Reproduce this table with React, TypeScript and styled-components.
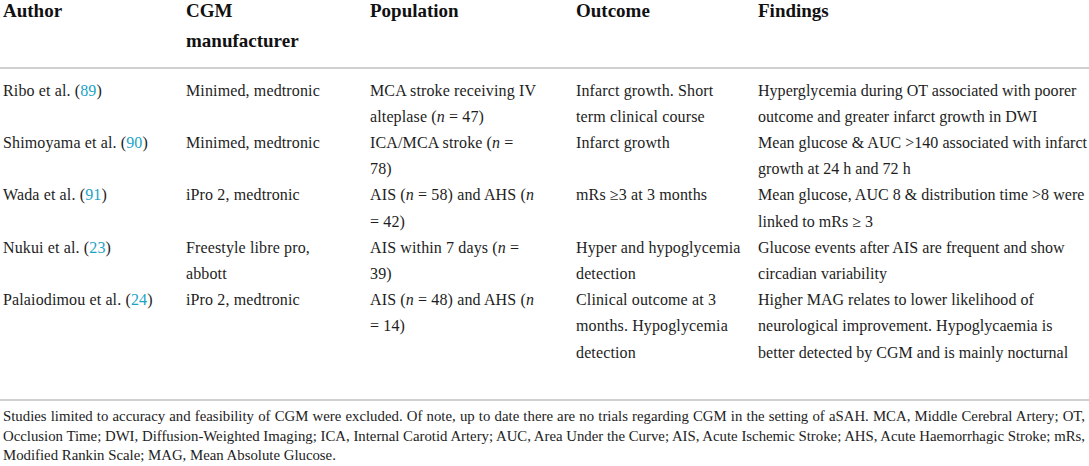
import React from "react";
import styled, { createGlobalStyle } from "styled-components";

const Global = createGlobalStyle`
  html, body { margin: 0; padding: 0; background: #fff; overflow: hidden; }
  body { font-family: "Liberation Serif", "Times New Roman", serif; color: #1d1d1d; }
`;

const Wrap = styled.div`
  width: 1089px;
`;

const Table = styled.table`
  width: 100%;
  border-collapse: collapse;
  table-layout: fixed;
  margin-top: -4px;
`;

const Th = styled.th`
  text-align: left;
  vertical-align: top;
  font-size: 19px;
  font-weight: bold;
  line-height: 30px;
  padding: 0 8px 11px 3px;
  color: #111;
  border-bottom: 2px solid #d0d0d0;
`;

const Td = styled.td<{ $pr: number; $ls: number; $first?: boolean; $last?: boolean }>`
  vertical-align: top;
  font-size: 16px;
  letter-spacing: ${(p) => p.$ls}px;
  line-height: 26.2px;
  padding-left: 3px;
  padding-right: ${(p) => p.$pr}px;
  padding-top: ${(p) => (p.$first ? 8.5 : 0)}px;
  padding-bottom: ${(p) => (p.$last ? 33 : 0)}px;
  white-space: normal;
`;

const Ref = styled.span`
  color: #1ba3c6;
`;

const Note = styled.p`
  margin: 0;
  border-top: 2px solid #d0d0d0;
  padding: 6.5px 4px 0 3px;
  font-size: 14.8px;
  line-height: 19.5px;
  text-align: justify;
  color: #222;
`;

const I = styled.i``;

type Row = [React.ReactNode, React.ReactNode, React.ReactNode, React.ReactNode, React.ReactNode];

const padRight = [8, 20, 12, 10, 0];
const spacing = [0.13, 0.13, 0.13, 0.13, 0.03];

const rows: Row[] = [
  [
    <>Ribo et al. (<Ref>89</Ref>)</>,
    "Minimed, medtronic",
    <>MCA stroke receiving IV<br />alteplase (<I>n</I> = 47)</>,
    "Infarct growth. Short term clinical course",
    "Hyperglycemia during OT associated with poorer outcome and greater infarct growth in DWI",
  ],
  [
    <>Shimoyama et al. (<Ref>90</Ref>)</>,
    "Minimed, medtronic",
    <>ICA/MCA stroke (<I>n</I> =<br />78)</>,
    "Infarct growth",
    <>Mean glucose &amp; AUC &gt;140 associated with&nbsp;infarct<br />growth at 24 h and 72 h</>,
  ],
  [
    <>Wada et al. (<Ref>91</Ref>)</>,
    "iPro 2, medtronic",
    <>AIS (<I>n</I> = 58) and AHS (<I>n</I><br />= 42)</>,
    "mRs ≥3 at 3 months",
    <>Mean glucose, AUC 8 &amp; distribution time &gt;8&nbsp;were<br />linked to mRs ≥ 3</>,
  ],
  [
    <>Nukui et al. (<Ref>23</Ref>)</>,
    "Freestyle libre pro, abbott",
    <>AIS within 7 days (<I>n</I> =<br />39)</>,
    "Hyper and hypoglycemia detection",
    "Glucose events after AIS are frequent and show circadian variability",
  ],
  [
    <>Palaiodimou et al. (<Ref>24</Ref>)</>,
    "iPro 2, medtronic",
    <>AIS (<I>n</I> = 48) and AHS (<I>n</I><br />= 14)</>,
    "Clinical outcome at 3 months. Hypoglycemia detection",
    "Higher MAG relates to lower likelihood of neurological improvement. Hypoglycaemia is better detected by CGM and is mainly nocturnal",
  ],
];

export default function App() {
  return (
    <Wrap>
      <Global />
      <Table>
        <colgroup>
          <col style={{ width: 183 }} />
          <col style={{ width: 184 }} />
          <col style={{ width: 206 }} />
          <col style={{ width: 182 }} />
          <col />
        </colgroup>
        <thead>
          <tr>
            <Th>Author</Th>
            <Th>
              CGM
              <br />
              manufacturer
            </Th>
            <Th>Population</Th>
            <Th>Outcome</Th>
            <Th>Findings</Th>
          </tr>
        </thead>
        <tbody>
          {rows.map((r, i) => (
            <tr key={i}>
              {r.map((c, j) => (
                <Td
                  key={j}
                  $pr={padRight[j]}
                  $ls={spacing[j]}
                  $first={i === 0}
                  $last={i === rows.length - 1}
                >
                  {c}
                </Td>
              ))}
            </tr>
          ))}
        </tbody>
      </Table>
      <Note>
        Studies limited to accuracy and feasibility of CGM were excluded. Of note, up to date there are no trials
        regarding CGM in the setting of aSAH. MCA, Middle Cerebral Artery; OT, Occlusion Time; DWI, Diffusion-Weighted
        Imaging; ICA, Internal Carotid Artery; AUC, Area Under the Curve; AIS, Acute Ischemic Stroke; AHS, Acute
        Haemorrhagic Stroke; mRs, Modified Rankin Scale; MAG, Mean Absolute Glucose.
      </Note>
    </Wrap>
  );
}
